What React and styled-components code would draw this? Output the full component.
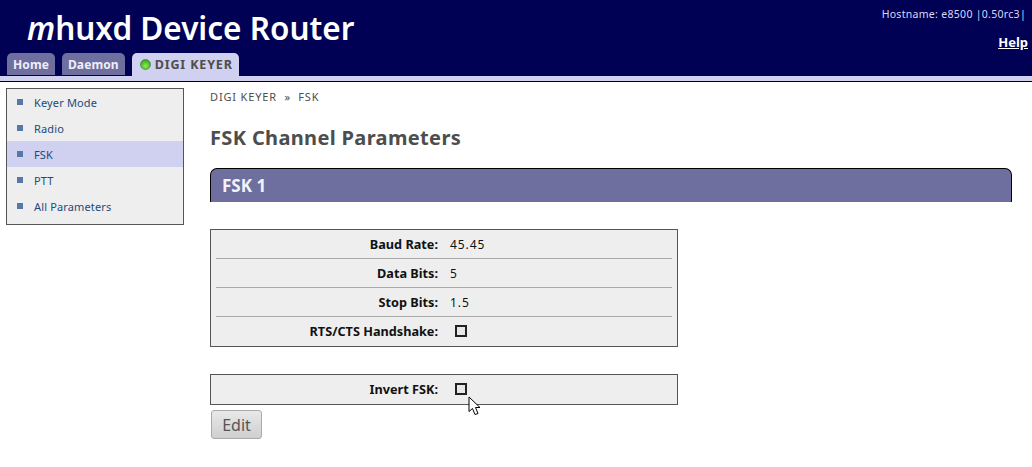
import React from "react";
import styled, { createGlobalStyle } from "styled-components";

const Global = createGlobalStyle`
  html, body { margin: 0; padding: 0; background: #fff; }
  body { font-family: "Noto Sans", sans-serif; font-size: 11px; color: #4d4d4d; }
`;

const Header = styled.div`
  position: relative;
  height: 76px;
  background: #000055;
  display: flex;
  flex-direction: column;
  justify-content: space-between;
`;

const Title = styled.h1`
  margin: 0;
  padding: 8px 0 0 27px;
  font-size: 31.5px;
  line-height: 40px;
  font-weight: 600;
  color: #fff;
  em { font-style: italic; }
`;

const Info = styled.div`
  position: absolute;
  top: 7px;
  right: 6px;
  font-size: 10.5px;
  line-height: 14px;
  letter-spacing: 0.3px;
  color: #d8d8f4;
`;

const Help = styled.a`
  position: absolute;
  top: 34px;
  right: 4px;
  font-size: 13px;
  line-height: 16px;
  font-weight: 700;
  color: #fff;
  text-decoration: underline;
`;

const Tabs = styled.div`
  display: flex;
  gap: 7px;
  padding-left: 7px;
  height: 23px;
  margin-top: auto;
`;

const Tab = styled.div`
  display: flex;
  align-items: center;
  gap: 4px;
  padding: ${p => (p.$active ? "0 6px 0 8px" : "0 6px")};
  height: ${p => (p.$active ? "23px" : "22px")};
  border-radius: 5px 5px 0 0;
  font-size: ${p => (p.$active ? "12.5px" : "12px")};
  font-weight: 700;
  letter-spacing: ${p => (p.$active ? "0.85px" : "0.1px")};
  color: ${p => (p.$active ? "#4d4d4d" : "#eeeef8")};
  background: ${p => (p.$active ? "#d0d0f0" : "#6f6f9f")};
`;

const Strip = styled.div`
  height: 5px;
  background: #d0d0f0;
  border-bottom: 1px solid #000;
`;

const Body = styled.div`
  display: flex;
  align-items: flex-start;
  padding: 6px 20px 0 6px;
  gap: 26px;
`;

const Side = styled.ul`
  flex: none;
  list-style: none;
  margin: 0;
  padding: 0 0 5px;
  width: 176px;
  background: #eeeeee;
  border: 1px solid #555;
`;

const SideItem = styled.li`
  display: flex;
  align-items: center;
  height: 26px;
  padding-left: 10px;
  gap: 11px;
  font-size: 11px;
  letter-spacing: 0.15px;
  color: #1d4a7a;
  background: ${p => (p.$active ? "#d0d0f0" : "transparent")};
  &::before {
    content: "";
    width: 6px;
    height: 6px;
    background: #5578a8;
  }
`;

const Main = styled.div`
  flex: 1;
  min-width: 0;
`;

const Crumb = styled.div`
  font-size: 11px;
  line-height: 15px;
  margin-top: 1px;
  letter-spacing: 0.85px;
`;

const Heading = styled.h2`
  margin: 20px 0 17px;
  font-size: 20px;
  line-height: 27px;
  font-weight: 700;
  letter-spacing: 0.35px;
  color: #4d4d4d;
`;

const Band = styled.div`
  height: 34px;
  box-sizing: border-box;
  padding-left: 11px;
  display: flex;
  align-items: center;
  background: #6f6f9f;
  border: 1px solid #000;
  border-bottom: 0;
  border-radius: 7px 7px 0 0;
  color: #f2f2fa;
  font-size: 17px;
  font-weight: 700;
`;

const Group = styled.div`
  width: 456px;
  margin-top: 27px;
  padding: 0 5px 1px;
  background: #eeeeee;
  border: 1px solid #555;
`;

const Row = styled.div`
  display: flex;
  align-items: center;
  height: 28px;
  border-top: ${p => (p.$first ? "0" : "1px solid #aaa")};
  font-size: 12.7px;
  color: #111;
`;

const Label = styled.div`
  width: 222px;
  text-align: right;
  font-weight: 700;
`;

const Value = styled.div`
  margin-left: 12px;
  font-size: 12px;
  letter-spacing: 0.9px;
`;

const Box = styled.span`
  display: block;
  box-sizing: border-box;
  width: 12px;
  height: 12px;
  margin: 0 0 0 4.5px;
  background: #e8e8e8;
  border: 2px solid #222;
`;

const EditButton = styled.button`
  display: block;
  margin: 5px 0 0 1px;
  width: 51px;
  height: 29px;
  padding: 0;
  font-family: "Noto Sans", sans-serif;
  font-size: 16px;
  color: #555;
  background: linear-gradient(#e8e8e8, #cfcfcf);
  border: 1px solid #aaa;
  border-radius: 3px;
`;

const Cursor = styled.svg`
  position: absolute;
  left: 468px;
  top: 396px;
`;

const LedDot = () => (
  <svg width="11" height="11" viewBox="0 0 11 11">
    <defs>
      <radialGradient id="led" cx="0.5" cy="0.65" r="0.6">
        <stop offset="0" stopColor="#8ff04a" />
        <stop offset="1" stopColor="#35a81e" />
      </radialGradient>
    </defs>
    <circle cx="5.5" cy="5.5" r="5" fill="url(#led)" stroke="#4c7a4c" strokeWidth="0.7" />
  </svg>
);

const menu = ["Keyer Mode", "Radio", "FSK", "PTT", "All Parameters"];
const rows = [
  ["Baud Rate:", "45.45"],
  ["Data Bits:", "5"],
  ["Stop Bits:", "1.5"],
  ["RTS/CTS Handshake:", null],
];

export default function App() {
  return (
    <>
      <Global />
      <Header>
        <Title><em>m</em>huxd Device Router</Title>
        <Info>Hostname: e8500 |0.50rc3|</Info>
        <Help>Help</Help>
        <Tabs>
          <Tab>Home</Tab>
          <Tab>Daemon</Tab>
          <Tab $active><LedDot />DIGI KEYER</Tab>
        </Tabs>
      </Header>
      <Strip />
      <Body>
        <Side>
          {menu.map(m => (
            <SideItem key={m} $active={m === "FSK"}>{m}</SideItem>
          ))}
        </Side>
        <Main>
          <Crumb>DIGI KEYER &nbsp;»&nbsp; FSK</Crumb>
          <Heading>FSK Channel Parameters</Heading>
          <Band>FSK 1</Band>
          <Group>
            {rows.map((r, i) => (
              <Row key={r[0]} $first={i === 0}>
                <Label>{r[0]}</Label>
                {r[1] ? <Value>{r[1]}</Value> : <Value><Box /></Value>}
              </Row>
            ))}
          </Group>
          <Group>
            <Row $first>
              <Label>Invert FSK:</Label>
              <Value><Box /></Value>
            </Row>
          </Group>
          <EditButton>Edit</EditButton>
        </Main>
      </Body>
      <Cursor width="14" height="21" viewBox="0 0 14 21">
        <path d="M1 1 L1 15.5 L4.5 12.5 L7 18.5 L10 17.5 L7.5 11.5 L12 11.5 Z" fill="#fff" stroke="#000" strokeWidth="1" />
      </Cursor>
    </>
  );
}
